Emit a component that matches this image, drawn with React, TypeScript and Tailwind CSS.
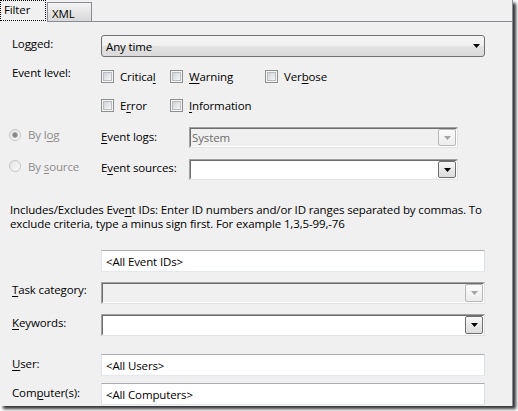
import React from "react";

function U({ children }: { children: React.ReactNode }) {
  return <span className="underline decoration-1 underline-offset-[2px]">{children}</span>;
}

function Tri({ color }: { color: string }) {
  return (
    <svg width="7" height="4" viewBox="0 0 7 4" className="block">
      <polygon points="0,0 7,0 3.5,4" fill={color} />
    </svg>
  );
}

function Checkbox({ label }: { label: React.ReactNode }) {
  return (
    <div className="flex items-center h-[15px]">
      <div className="w-[13px] h-[13px] border border-[#8e8f8f] bg-[#f4f4f4] p-[1px] shrink-0">
        <div className="w-full h-full border border-[#b9bdc1] bg-gradient-to-br from-[#cfd2d6] to-[#f7f7f7]" />
      </div>
      <span className="ml-[6px] leading-[15px] whitespace-nowrap">{label}</span>
    </div>
  );
}

function Radio({ checked }: { checked?: boolean }) {
  return (
    <div className="w-[12px] h-[12px] rounded-full border border-[#c6c6c6] bg-gradient-to-br from-[#e4e4e4] to-[#fbfbfb] flex items-center justify-center shrink-0">
      {checked && <div className="w-[6px] h-[6px] rounded-full bg-[#858585] border border-[#a9a9a9]" />}
    </div>
  );
}

function ArrowBtn({ disabled }: { disabled?: boolean }) {
  return disabled ? (
    <div className="w-[18px] h-full rounded-[2px] border border-[#b5b9bc] bg-gradient-to-b from-[#fbfbfb] to-[#ececec] flex items-center justify-center shrink-0">
      <Tri color="#a3a3a3" />
    </div>
  ) : (
    <div className="w-[18px] h-full rounded-[2px] border border-[#707070] bg-gradient-to-b from-[#f7f7f7] to-[#dcdcdc] flex items-center justify-center shrink-0">
      <Tri color="#000000" />
    </div>
  );
}

function Textbox({ text }: { text: string }) {
  return (
    <div className="w-[384px] h-[22px] shrink-0 bg-white border border-t-[#abadb3] border-l-[#e2e3ea] border-r-[#dbdfe6] border-b-[#e3e9ef] flex items-center pl-[4px] whitespace-nowrap">
      {text}
    </div>
  );
}

function Sunken({ className, disabled, text }: { className: string; disabled?: boolean; text?: string }) {
  return (
    <div className={className + " shrink-0 border border-t-[#a0a0a0] border-l-[#a0a0a0] border-r-[#e3e3e3] border-b-[#e3e3e3]"}>
      <div
        className={
          "w-full h-full border border-t-[#6d6d6d] border-l-[#6d6d6d] border-r-white border-b-white flex items-stretch " +
          (disabled ? "bg-[#f0f0f0]" : "bg-white")
        }
      >
        <div className={"flex-1 flex items-center pl-[1px] " + (disabled ? "text-[#6d6d6d]" : "")}>{text}</div>
        <ArrowBtn disabled={disabled} />
      </div>
    </div>
  );
}

export default function App() {
  return (
    <div className="w-[518px] h-[411px] bg-white overflow-hidden font-['Segoe_UI','Open_Sans',sans-serif] text-[11.5px] tracking-[-0.13px] leading-[15px] text-black">
      <div className="w-[513px] h-[406px] bg-[#f0f0f0] shadow-[3px_3px_3px_rgba(0,0,0,0.8)] flex flex-col overflow-hidden">
        {/* tabs */}
        <div className="flex h-[22px] shrink-0">
          <div className="w-[47px] h-[22px]">
            <div className="w-[46px] h-[21px] border border-dotted border-black pl-[3px] pt-[1px]">Filter</div>
          </div>
          <div className="flex-1 border-b border-r border-[#898c95] pt-[2px]">
            <div className="w-[45px] h-[19px] border border-b-0 border-[#898c95] bg-gradient-to-b from-[#f4f4f4] to-[#d8d8d8] pl-[4px] pt-[3px]">
              XML
            </div>
          </div>
        </div>

        {/* page */}
        <div className="flex-1 border-r border-[#898c95] flex flex-col">
          {/* Logged */}
          <div className="flex mt-[13px] h-[22px] shrink-0">
            <div className="w-[101px] shrink-0 pl-[12px] pt-[1px]">
              Lo<U>g</U>ged:
            </div>
            <div className="w-[384px] h-[22px] rounded-[3px] border border-[#707070] bg-[linear-gradient(to_bottom,#f6f6f6_0%,#efefef_50%,#e3e3e3_50%,#d9d9d9_100%)] flex items-center pl-[4px] pr-[4px]">
              <span className="flex-1">Any time</span>
              <Tri color="#000000" />
            </div>
          </div>

          {/* Event level */}
          <div className="flex mt-[8px] shrink-0">
            <div className="w-[101px] shrink-0 pl-[12px]">Event level:</div>
            <div className="pt-[4px] flex flex-col gap-[14px]">
              <div className="grid grid-cols-[69px_95px_auto]">
                <Checkbox label={<>Critica<U>l</U></>} />
                <Checkbox label={<><U>W</U>arning</>} />
                <Checkbox label={<>Ver<U>b</U>ose</>} />
              </div>
              <div className="grid grid-cols-[69px_95px_auto]">
                <Checkbox label={<>E<U>r</U>ror</>} />
                <Checkbox label={<><U>I</U>nformation</>} />
              </div>
            </div>
          </div>

          {/* By log */}
          <div className="flex mt-[14px] h-[21px] shrink-0">
            <div className="w-[101px] shrink-0 pl-[9px] flex">
              <div className="pt-[2px]">
                <Radio checked />
              </div>
              <div className="ml-[7px] text-[#8c8c8c] whitespace-nowrap">
                By l<U>o</U>g
              </div>
            </div>
            <div className="w-[88px] shrink-0 pt-[2px] whitespace-nowrap">
              <U>E</U>vent logs:
            </div>
            <Sunken className="w-[269px] h-[21px]" disabled text="System" />
          </div>

          {/* By source */}
          <div className="flex mt-[11px] h-[21px] shrink-0">
            <div className="w-[101px] shrink-0 pl-[9px] flex">
              <div className="pt-[1px]">
                <Radio />
              </div>
              <div className="ml-[7px] text-[#8c8c8c] whitespace-nowrap">
                By <U>s</U>ource
              </div>
            </div>
            <div className="w-[88px] shrink-0 pt-[1px] whitespace-nowrap">
              E<U>v</U>ent sources:
            </div>
            <Sunken className="w-[269px] h-[21px]" />
          </div>

          {/* paragraph */}
          <div className="mt-[23px] pl-[10px] leading-[14px] whitespace-nowrap shrink-0">
            <div>Includes/Excludes Eve<U>n</U>t IDs: Enter ID numbers and/or ID ranges separated by commas. To</div>
            <div>exclude criteria, type a minus sign first. For example 1,3,5-99,-76</div>
          </div>

          {/* Event IDs */}
          <div className="flex mt-[19px] h-[22px] shrink-0">
            <div className="w-[101px] shrink-0" />
            <Textbox text="<All Event IDs>" />
          </div>

          {/* Task category */}
          <div className="flex mt-[10px] h-[22px] shrink-0">
            <div className="w-[101px] shrink-0 pl-[12px] whitespace-nowrap">
              <U>T</U>ask category:
            </div>
            <Sunken className="w-[384px] h-[22px]" disabled />
          </div>

          {/* Keywords */}
          <div className="flex mt-[10px] h-[22px] shrink-0">
            <div className="w-[101px] shrink-0 pl-[12px] pt-[1px]">
              <U>K</U>eywords:
            </div>
            <Sunken className="w-[384px] h-[22px]" />
          </div>

          {/* User */}
          <div className="flex mt-[18px] h-[22px] shrink-0">
            <div className="w-[101px] shrink-0 pl-[12px] pt-[2px]">
              <U>U</U>ser:
            </div>
            <Textbox text="<All Users>" />
          </div>

          {/* Computer */}
          <div className="flex mt-[7px] h-[22px] shrink-0">
            <div className="w-[101px] shrink-0 pl-[12px] pt-[2px] whitespace-nowrap">
              Com<U>p</U>uter(s):
            </div>
            <Textbox text="<All Computers>" />
          </div>
        </div>
      </div>
    </div>
  );
}
